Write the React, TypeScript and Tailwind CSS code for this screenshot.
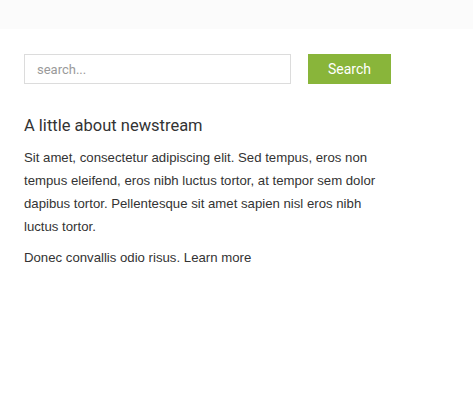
export default function App() {
  return (
    <div className="min-h-[411px] w-[473px] bg-white">
      {/* top strip */}
      <div className="h-[29px] bg-[#fbfbfb]" />

      <div className="px-6 pt-[25px]">
        {/* search */}
        <form className="flex items-center" onSubmit={(e) => e.preventDefault()}>
          <input
            type="text"
            placeholder="search..."
            className="h-[30px] w-[267px] border border-[#dcdcdc] bg-white px-3 text-[13px] text-[#555] placeholder:text-[#9a9a9a] outline-none"
            style={{ fontFamily: 'Roboto, sans-serif' }}
          />
          <button
            type="submit"
            className="ml-[17px] h-[30px] w-[83px] bg-[#89b53a] text-[14px] text-white"
            style={{ fontFamily: 'Roboto, sans-serif' }}
          >
            Search
          </button>
        </form>

        {/* about */}
        <div className="mt-[30px] w-[360px] text-[#333]">
          <h3 className="text-[16.5px] leading-[24px] font-['Roboto',sans-serif]">
            A little about newstream
          </h3>
          <p className="mt-[8px] text-[13.2px] leading-[23px] font-['Liberation_Sans',Arial,sans-serif]">
            Sit amet, consectetur adipiscing elit. Sed tempus, eros non tempus eleifend, eros nibh luctus tortor, at tempor sem dolor dapibus tortor. Pellentesque sit amet sapien nisl eros nibh luctus tortor.
          </p>
          <p className="mt-[8px] text-[13.2px] leading-[23px] font-['Liberation_Sans',Arial,sans-serif]">
            Donec convallis odio risus. <a href="#" className="text-[#333]">Learn more</a>
          </p>
        </div>
      </div>
    </div>
  )
}
